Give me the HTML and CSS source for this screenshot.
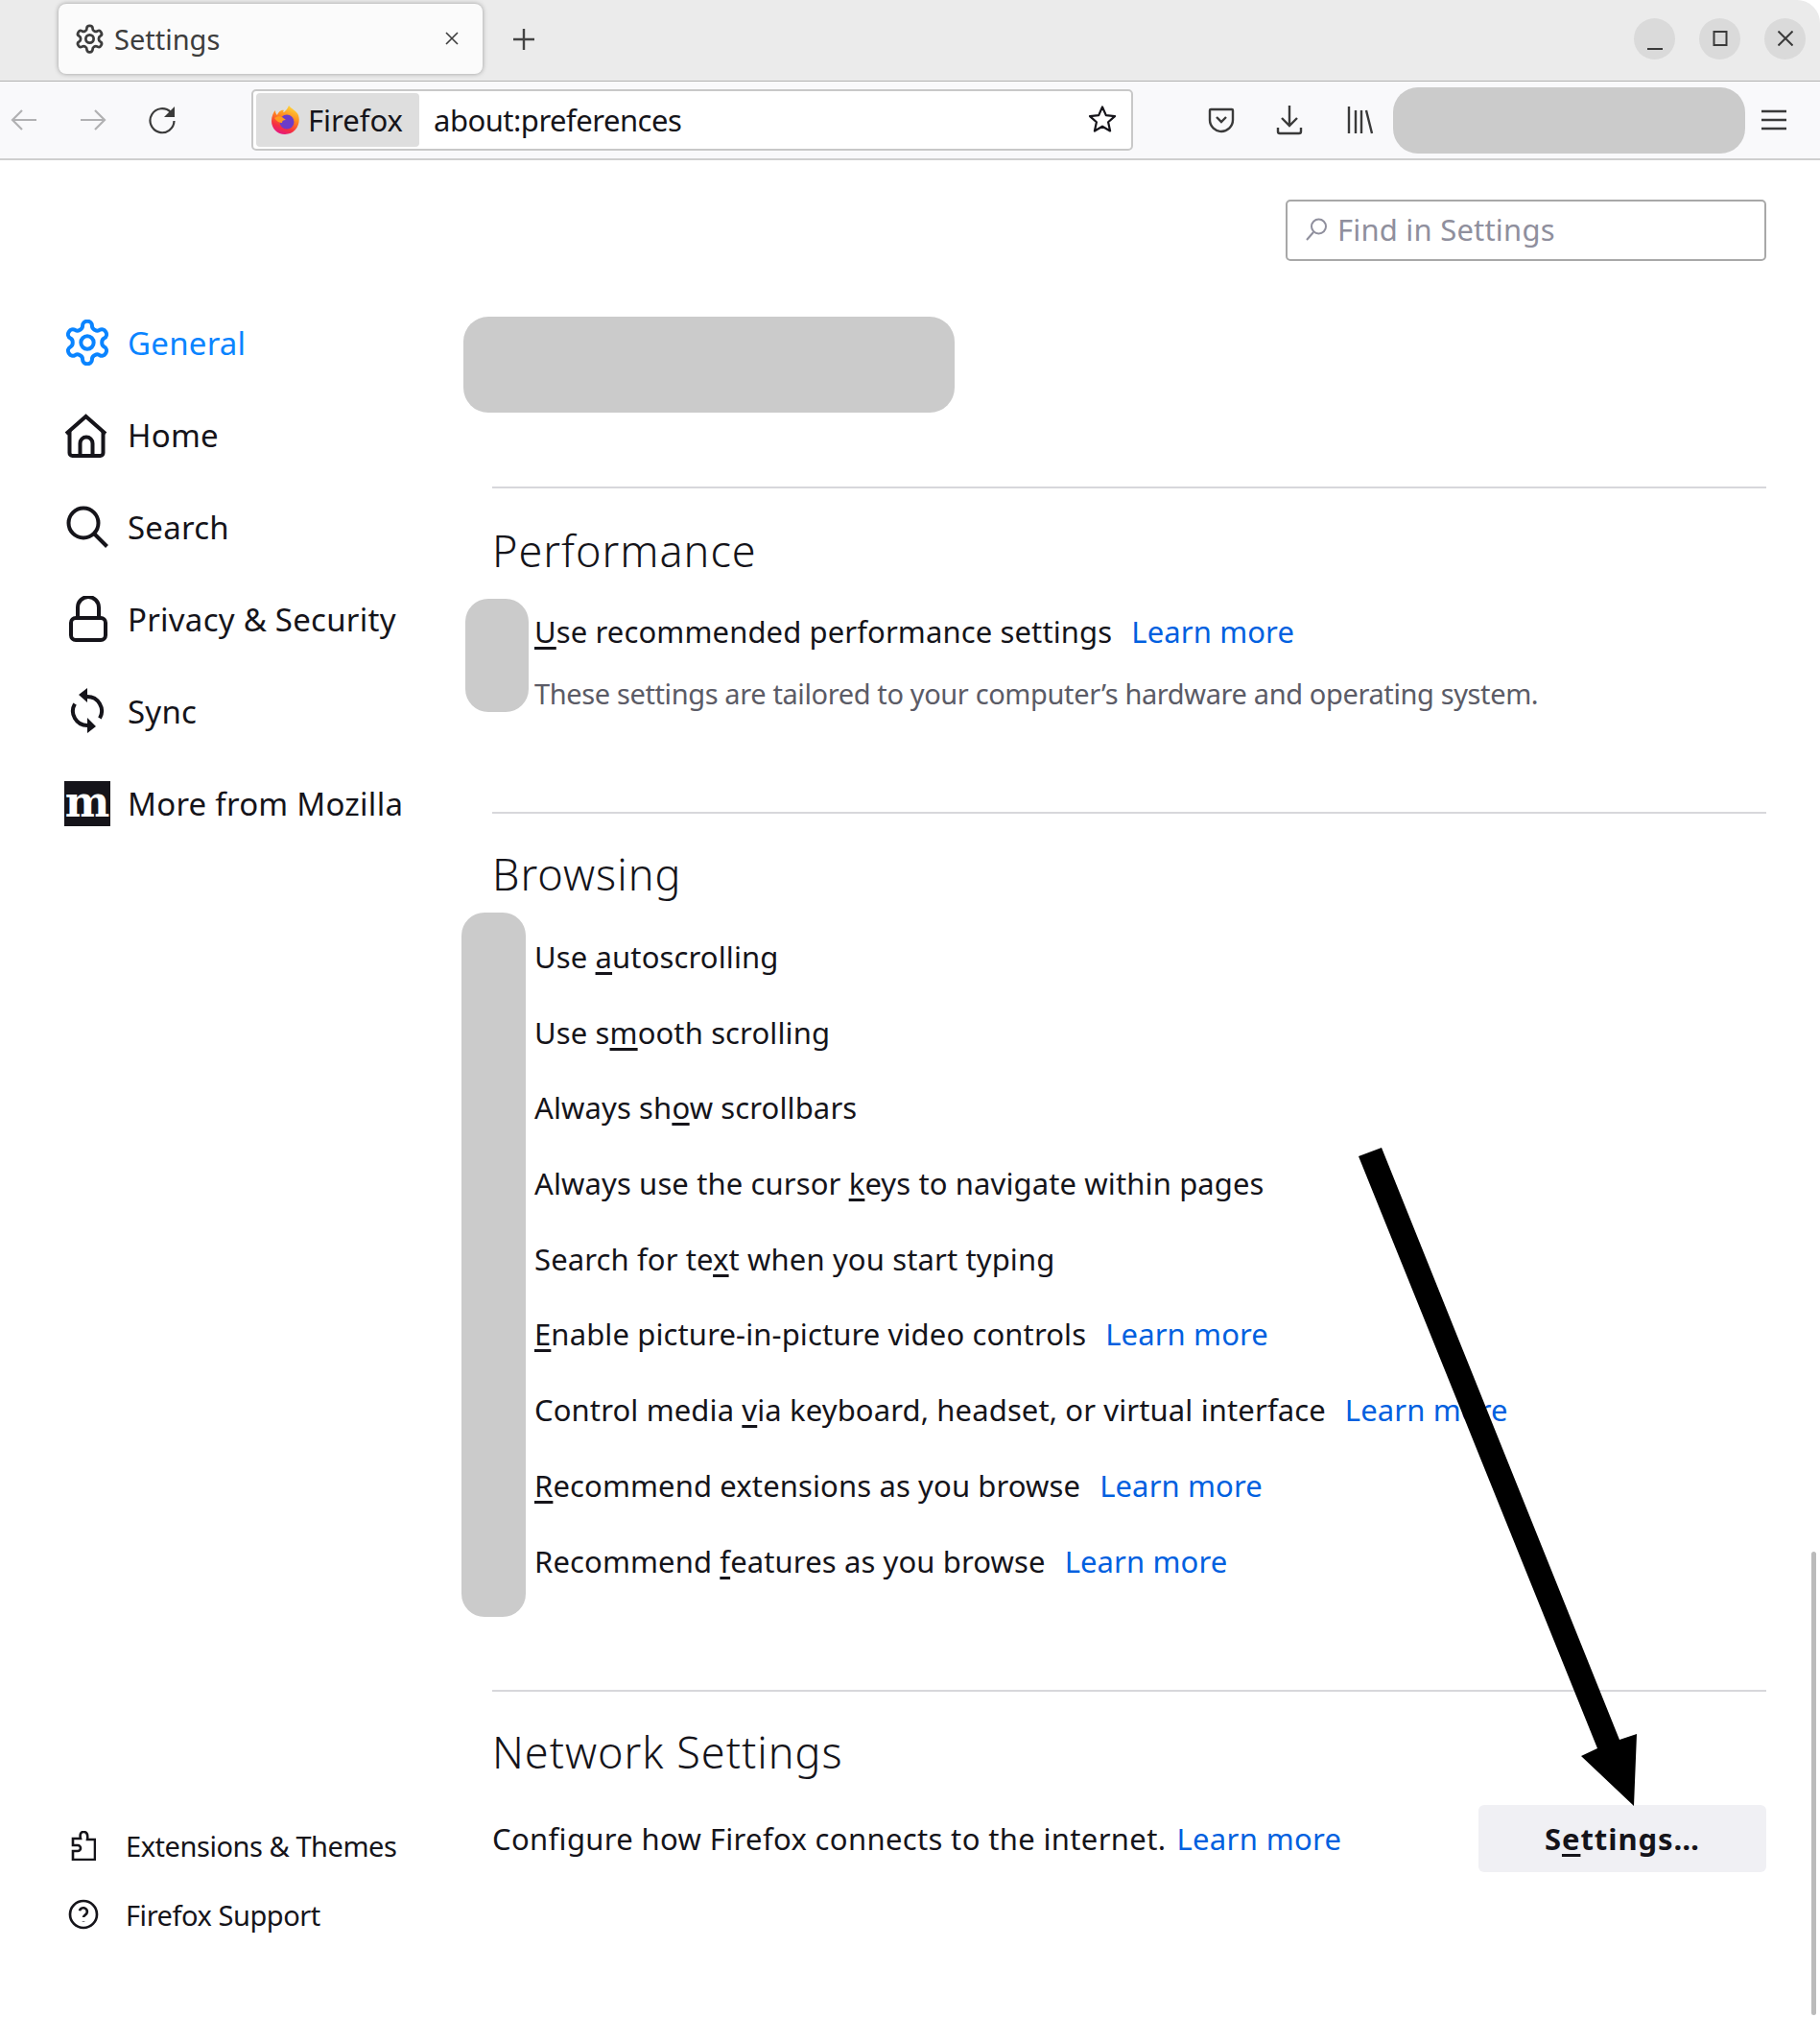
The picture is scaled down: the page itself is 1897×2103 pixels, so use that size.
FILE: index.html
```html
<!DOCTYPE html>
<html lang="en">
<head>
  <meta charset="UTF-8">
  <meta name="viewport" content="width=device-width, initial-scale=1.0">
  <title>Settings</title>
  <link rel="stylesheet" href="styles.css">
</head>
<body>
  <div class="window">
    <!-- tab strip -->
    <div class="tabbar">
      <div class="tab">
        <svg class="tab-icon" viewBox="0 0 24 24"><path d="M12.22 2h-.44a2 2 0 0 0-2 2v.18a2 2 0 0 1-1 1.73l-.43.25a2 2 0 0 1-2 0l-.15-.08a2 2 0 0 0-2.73.73l-.22.38a2 2 0 0 0 .73 2.73l.15.1a2 2 0 0 1 1 1.72v.51a2 2 0 0 1-1 1.74l-.15.09a2 2 0 0 0-.73 2.73l.22.38a2 2 0 0 0 2.73.73l.15-.08a2 2 0 0 1 2 0l.43.25a2 2 0 0 1 1 1.73V20a2 2 0 0 0 2 2h.44a2 2 0 0 0 2-2v-.18a2 2 0 0 1 1-1.73l.43-.25a2 2 0 0 1 2 0l.15.08a2 2 0 0 0 2.73-.73l.22-.39a2 2 0 0 0-.73-2.73l-.15-.08a2 2 0 0 1-1-1.74v-.5a2 2 0 0 1 1-1.74l.15-.09a2 2 0 0 0 .73-2.73l-.22-.38a2 2 0 0 0-2.73-.73l-.15.08a2 2 0 0 1-2 0l-.43-.25a2 2 0 0 1-1-1.73V4a2 2 0 0 0-2-2z"/><circle cx="12" cy="12" r="3"/></svg>
        <span class="tab-title">Settings</span>
        <svg class="tab-close" viewBox="0 0 16 16"><path d="M2 2l12 12M14 2L2 14"/></svg>
      </div>
      <svg class="new-tab" viewBox="0 0 24 24"><path d="M12 1v22M1 12h22"/></svg>
      <div class="window-controls">
        <div class="win-btn"><svg class="win-min" viewBox="0 0 16 16"><path d="M0 15h16"/></svg></div>
        <div class="win-btn"><svg viewBox="0 0 16 16"><rect x="1.5" y="1" width="13" height="14"/></svg></div>
        <div class="win-btn"><svg viewBox="0 0 16 16"><path d="M.5.5l15 15M15.5.5l-15 15"/></svg></div>
      </div>
    </div>

    <!-- toolbar -->
    <div class="toolbar">
      <svg class="nav-btn muted" viewBox="0 0 28 24"><path d="M27 12H2M12 2L2 12l10 10"/></svg>
      <svg class="nav-btn muted" viewBox="0 0 28 24"><path d="M1 12h25M16 2l10 10-10 10"/></svg>
      <svg class="nav-btn reload" viewBox="0 0 30 30"><path d="M24 7a12.5 12.5 0 1 0 3.5 9"/><path class="solid" d="M28 1v11H17z"/></svg>
      <div class="urlbar">
        <div class="identity">
          <svg class="ff-logo" viewBox="0 0 30 32">
            <defs>
              <linearGradient id="ffOuter" x1="0.7" y1="0" x2="0.3" y2="1">
                <stop offset="0" stop-color="#ffd83a"/>
                <stop offset="0.4" stop-color="#ff8a1f"/>
                <stop offset="0.75" stop-color="#f5303f"/>
                <stop offset="1" stop-color="#e31587"/>
              </linearGradient>
            </defs>
            <path fill="url(#ffOuter)" d="M18 1c3 4 8 5 10 10 3 9-3 20-14 20C6 31 0 25 0 17 0 12 2 8 4 6c0 3 1 4 2 5 1-3 4-6 7-5-1 1-1 2 0 2 2-2 4-4 5-7z"/>
            <circle cx="16" cy="18" r="7.5" fill="#6b3cc9"/>
            <path fill="#ff9a1f" d="M3 14c3-2 6-2 8-1l4 3c-3 0-4 1-4 3-3 0-6-2-8-5z"/>
          </svg>
          <span class="identity-label">Firefox</span>
        </div>
        <span class="url-text">about:preferences</span>
        <svg class="star" viewBox="0 0 32 32"><path d="M16 2.5l3.8 8.6 9.2 1-6.9 6.2 2 9.2-8.1-4.8-8.1 4.8 2-9.2L3 12.1l9.2-1z"/></svg>
      </div>
      <svg class="tool-icon pocket" viewBox="0 0 28 28"><path d="M3 3h22a1 1 0 0 1 1 1v10c0 7-6 12-12 12S2 21 2 14V4a1 1 0 0 1 1-1z"/><path d="M9 11l5 5 5-5"/></svg>
      <svg class="tool-icon download" viewBox="0 0 28 32"><path d="M14 1v21M6 14l8 8 8-8"/><path d="M2 24v4a2 2 0 0 0 2 2h20a2 2 0 0 0 2-2v-4"/></svg>
      <svg class="tool-icon library" viewBox="0 0 28 30"><path d="M2 1v28M9 5v24M15 5v24M20 5l6 24"/></svg>
      <div class="account-block"></div>
      <svg class="tool-icon menu" viewBox="0 0 26 22"><path d="M0 2h26M0 11h26M0 20h26"/></svg>
    </div>

    <!-- preferences page -->
    <div class="page">
      <aside class="sidebar">
        <nav class="cat-list">
          <a class="cat active">
            <svg class="cat-icon" viewBox="1.6 1.2 20.8 21.6"><path d="M12.22 2h-.44a2 2 0 0 0-2 2v.18a2 2 0 0 1-1 1.73l-.43.25a2 2 0 0 1-2 0l-.15-.08a2 2 0 0 0-2.73.73l-.22.38a2 2 0 0 0 .73 2.73l.15.1a2 2 0 0 1 1 1.72v.51a2 2 0 0 1-1 1.74l-.15.09a2 2 0 0 0-.73 2.73l.22.38a2 2 0 0 0 2.73.73l.15-.08a2 2 0 0 1 2 0l.43.25a2 2 0 0 1 1 1.73V20a2 2 0 0 0 2 2h.44a2 2 0 0 0 2-2v-.18a2 2 0 0 1 1-1.73l.43-.25a2 2 0 0 1 2 0l.15.08a2 2 0 0 0 2.73-.73l.22-.39a2 2 0 0 0-.73-2.73l-.15-.08a2 2 0 0 1-1-1.74v-.5a2 2 0 0 1 1-1.74l.15-.09a2 2 0 0 0 .73-2.73l-.22-.38a2 2 0 0 0-2.73-.73l-.15.08a2 2 0 0 1-2 0l-.43-.25a2 2 0 0 1-1-1.73V4a2 2 0 0 0-2-2z"/><circle cx="12" cy="12" r="3"/></svg>
            General
          </a>
          <a class="cat">
            <svg class="cat-icon" viewBox="0 0 48 48"><path d="M2 23L22.5 5 43 23"/><path d="M5.5 20v23a3 3 0 0 0 3 3h29a3 3 0 0 0 3-3V20"/><path d="M16.5 46V33a6.5 6.5 0 0 1 13 0v13"/></svg>
            Home
          </a>
          <a class="cat">
            <svg class="cat-icon" viewBox="0 0 48 48"><circle cx="20" cy="20" r="15.5"/><path d="M31 31l13.5 13.5"/></svg>
            Search
          </a>
          <a class="cat">
            <svg class="cat-icon" viewBox="0 0 48 48"><rect x="7" y="23" width="36" height="23" rx="5"/><path d="M14 23V12a11 11 0 0 1 22 0v11"/></svg>
            Privacy &amp; Security
          </a>
          <a class="cat">
            <svg class="cat-icon" viewBox="0 0 48 48"><path d="M24 9a15 15 0 0 1 13 22.5"/><path d="M24 39a15 15 0 0 1-13-22.5"/><path class="solid" d="M15 7L24 0v15zM33 40l-9-9v16z"/></svg>
            Sync
          </a>
          <a class="cat">
            <span class="moz-logo">m</span>
            More from Mozilla
          </a>
        </nav>
        <div class="footer-links">
          <a class="foot-link">
            <span class="foot-icon"><svg viewBox="0 0 26 31"><path d="M2 30h23V9h-8c1-6-1-8-4-8s-4 3-3 7H2v7h5a3 3 0 0 1 0 6H2z"/></svg></span>
            Extensions &amp; Themes
          </a>
          <a class="foot-link">
            <span class="foot-icon"><svg viewBox="0 0 24 24"><circle cx="12" cy="12" r="10.5"/><path d="M9 9.2a3 3 0 0 1 5.9 1c0 2-2.9 2.6-2.9 4"/><path d="M12 17.6v.4"/></svg></span>
            Firefox Support
          </a>
        </div>
      </aside>

      <main class="content">
        <div class="search-row">
          <div class="search-box">
            <svg class="search-glass" viewBox="0 0 24 24"><circle cx="14.5" cy="9" r="7.5"/><path d="M9 15L2 23"/></svg>
            <span>Find in Settings</span>
          </div>
        </div>

        <div class="block-top"></div>

        <section class="group first">
          <h2>Performance</h2>
          <div class="perf-row">
            <div class="block-perf"></div>
            <div class="perf-text">
              <div class="perf-line"><span><u>U</u>se recommended performance settings</span><a class="link">Learn more</a></div>
              <div class="desc">These settings are tailored to your computer’s hardware and operating system.</div>
            </div>
          </div>
        </section>

        <section class="group browsing">
          <h2>Browsing</h2>
          <div class="browse-row">
            <div class="block-browse"></div>
            <ul class="options">
              <li><span>Use <u>a</u>utoscrolling</span></li>
              <li><span>Use s<u>m</u>ooth scrolling</span></li>
              <li><span>Always sh<u>o</u>w scrollbars</span></li>
              <li><span>Always use the cursor <u>k</u>eys to navigate within pages</span></li>
              <li><span>Search for te<u>x</u>t when you start typing</span></li>
              <li><span><u>E</u>nable picture-in-picture video controls</span><a class="link">Learn more</a></li>
              <li><span>Control media <u>v</u>ia keyboard, headset, or virtual interface</span><a class="link">Learn more</a></li>
              <li><span><u>R</u>ecommend extensions as you browse</span><a class="link">Learn more</a></li>
              <li><span>Recommend <u>f</u>eatures as you browse</span><a class="link">Learn more</a></li>
            </ul>
          </div>
        </section>

        <section class="group network">
          <h2>Network Settings</h2>
          <div class="network-row">
            <div><span>Configure how Firefox connects to the internet.</span><a class="link tight">Learn more</a></div>
            <button class="btn" type="button">S<u>e</u>ttings…</button>
          </div>
        </section>
      </main>
    </div>

    <div class="scrollbar"></div>

    <!-- annotation drawn over the page -->
    <svg class="arrow" viewBox="0 0 1897 2103"><polygon points="1416,1205 1440,1196 1688,1813 1706,1807 1703,1882 1648,1830 1665,1822"/></svg>
  </div>
</body>
</html>
```

FILE: styles.css
```css
* {
  box-sizing: border-box;
}
body {
  margin: 0;
  background: #fff;
  font-family: "Noto Sans", Arial, sans-serif;
  color: #15141a;
  overflow: hidden;
}
.window {
  position: relative;
  width: 1897px;
  height: 2103px;
  overflow: hidden;
  background: #fff;
}
svg {
  display: block;
  fill: none;
  stroke: currentColor;
}
svg .solid {
  fill: currentColor;
  stroke: none;
}

/* tab strip */
.tabbar {
  display: flex;
  align-items: center;
  height: 85px;
  padding-left: 61px;
  background: #ebebeb;
  border-bottom: 1px solid #b2b2b2;
  border-top-right-radius: 24px;
}
.tab {
  display: flex;
  align-items: center;
  width: 442px;
  height: 73px;
  margin-top: -4px;
  padding: 0 24px 0 16px;
  background: #fbfbfb;
  border-radius: 8px;
  box-shadow: 0 0 5px rgba(0, 0, 0, 0.35);
  color: #3d3d3d;
}
.tab-icon {
  width: 33px;
  height: 33px;
  stroke-width: 2;
}
.tab-title {
  margin-left: 9px;
  font-size: 29px;
}
.tab-close {
  width: 16px;
  height: 16px;
  margin-left: auto;
  stroke-width: 1.6;
}
.new-tab {
  width: 24px;
  height: 24px;
  margin-left: 31px;
  margin-top: -2px;
  color: #444;
  stroke-width: 2.4;
}
.window-controls {
  display: flex;
  gap: 25px;
  margin-left: auto;
  margin-right: 15px;
  margin-top: -4px;
}
.win-btn {
  display: flex;
  align-items: center;
  justify-content: center;
  width: 43px;
  height: 43px;
  border-radius: 50%;
  background: #dadada;
  color: #3a3a3a;
}
.win-btn svg {
  width: 16px;
  height: 16px;
  stroke-width: 2;
}
.win-btn .win-min {
  margin-top: 8px;
}

/* toolbar */
.toolbar {
  display: flex;
  align-items: center;
  height: 82px;
  background: #f9f9fb;
  border-bottom: 2px solid #cfcfcf;
  color: #3a3a3a;
}
.nav-btn {
  width: 28px;
  height: 24px;
  stroke-width: 2.2;
}
.nav-btn.muted {
  margin-left: 11px;
  margin-right: 44px;
  color: #b1b1b3;
}
.nav-btn.muted + .nav-btn.muted {
  margin-left: 0;
  margin-right: 0;
}
.nav-btn.reload {
  width: 30px;
  height: 30px;
  margin-left: 43px;
}
.urlbar {
  display: flex;
  align-items: center;
  width: 919px;
  height: 64px;
  margin-left: 78px;
  padding-left: 3px;
  background: #fff;
  border: 2px solid #c8c8c8;
  border-radius: 5px;
}
.identity {
  display: flex;
  align-items: center;
  width: 170px;
  height: 56px;
  padding-left: 16px;
  background: #dedede;
  border-radius: 4px;
}
.ff-logo {
  width: 30px;
  height: 32px;
  stroke: none;
}
.identity-label {
  margin-left: 8px;
  font-size: 31px;
  color: #15141a;
}
.url-text {
  margin-left: 15px;
  font-size: 31px;
  letter-spacing: -0.5px;
  color: #15141a;
}
.star {
  width: 32px;
  height: 32px;
  margin-left: auto;
  margin-right: 14px;
  stroke-width: 2.2;
  stroke-linejoin: round;
  color: #15141a;
}
.tool-icon {
  flex: none;
  stroke-width: 2.4;
}
.pocket {
  width: 28px;
  height: 28px;
  margin-left: 78px;
}
.download {
  width: 28px;
  height: 32px;
  margin-left: 43px;
}
.library {
  width: 28px;
  height: 30px;
  margin-left: 46px;
}
.account-block {
  width: 367px;
  height: 69px;
  margin-left: 20px;
  background: #cbcbcb;
  border-radius: 26px;
}
.menu {
  width: 26px;
  height: 22px;
  margin-left: 17px;
}

/* page */
.page {
  display: flex;
  height: 1936px;
}
.sidebar {
  display: flex;
  flex-direction: column;
  justify-content: space-between;
  width: 481px;
  padding: 142px 0 72px 67px;
}
.cat {
  display: flex;
  align-items: center;
  gap: 18px;
  height: 96px;
  font-size: 33px;
  letter-spacing: 0.25px;
}
.cat.active {
  color: #0a84ff;
}
.cat-icon {
  flex: none;
  width: 48px;
  height: 48px;
  stroke-width: 4;
}
.cat.active .cat-icon {
  stroke-width: 1.8;
}
.moz-logo {
  flex: none;
  display: flex;
  align-items: center;
  justify-content: center;
  width: 48px;
  height: 47px;
  padding-bottom: 3px;
  background: #15141a;
  color: #fff;
  font-family: "DejaVu Serif", serif;
  font-weight: bold;
  font-size: 44px;
  line-height: 44px;
  letter-spacing: 0;
}
.foot-link {
  display: flex;
  align-items: center;
  height: 72px;
  font-size: 29px;
  letter-spacing: -0.45px;
}
.foot-icon {
  display: flex;
  justify-content: center;
  width: 40px;
  margin-right: 24px;
}
.foot-link:first-child svg {
  width: 26px;
  height: 31px;
  stroke-width: 2.6;
}
.foot-link:last-child svg {
  width: 32px;
  height: 32px;
  stroke-width: 2;
}

.content {
  flex: 1;
  padding: 41px 56px 0 32px;
  font-size: 31px;
  letter-spacing: 0.12px;
}
.search-row {
  display: flex;
  justify-content: flex-end;
}
.search-box {
  display: flex;
  align-items: center;
  width: 501px;
  height: 64px;
  padding: 0 0 3px 18px;
  border: 2px solid #a8a8a8;
  border-radius: 5px;
  font-size: 31px;
  letter-spacing: 0.2px;
  color: #8f8f9d;
}
.search-glass {
  width: 24px;
  height: 24px;
  margin-right: 10px;
  stroke-width: 2;
}
.block-top {
  width: 512px;
  height: 100px;
  margin: 58px 0 77px -30px;
  background: #cbcbcb;
  border-radius: 26px;
}

.group {
  border-top: 2px solid #d7d7db;
}
h2 {
  margin: 0;
  height: 60px;
  font-size: 45px;
  font-weight: 300;
  line-height: 60px;
  letter-spacing: 1px;
}
.group.first {
  padding: 35px 0 92px;
}
.group.browsing {
  padding: 33px 0 76px;
}
.group.network {
  padding-top: 33px;
}
.perf-row {
  display: flex;
  gap: 6px;
  margin: 20px 0 0 -28px;
}
.block-perf {
  flex: none;
  width: 66px;
  height: 118px;
  background: #cbcbcb;
  border-radius: 24px;
}
.perf-line {
  height: 68px;
  line-height: 68px;
}
.desc {
  font-size: 29px;
  line-height: 62px;
  color: #5b5b66;
  letter-spacing: -0.38px;
}
.link {
  margin-left: 20px;
  color: #0060df;
}
.link.tight {
  margin-left: 11px;
}
u {
  text-decoration-thickness: 3px;
  text-underline-offset: 4px;
}
.browse-row {
  display: flex;
  gap: 9px;
  margin: 10px 0 0 -32px;
}
.block-browse {
  flex: none;
  width: 67px;
  height: 734px;
  background: #cbcbcb;
  border-radius: 24px;
}
.options {
  margin: 0;
  padding: 7px 0 0;
  list-style: none;
}
.options li {
  height: 78.7px;
  line-height: 78px;
  white-space: nowrap;
}
.network-row {
  display: flex;
  align-items: center;
  justify-content: space-between;
  margin-top: 25px;
  letter-spacing: 0.35px;
}
.btn {
  width: 300px;
  height: 70px;
  border: none;
  border-radius: 6px;
  background: #f0f0f4;
  color: #15141a;
  font-family: inherit;
  font-size: 31px;
  font-weight: 700;
  letter-spacing: 0.95px;
}

.scrollbar {
  position: absolute;
  left: 1888px;
  top: 1617px;
  width: 5px;
  height: 483px;
  background: #bbb;
  border-radius: 3px;
}
.arrow {
  position: absolute;
  left: 0;
  top: 0;
  width: 1897px;
  height: 2103px;
  stroke: none;
  fill: #000;
  pointer-events: none;
}
```
